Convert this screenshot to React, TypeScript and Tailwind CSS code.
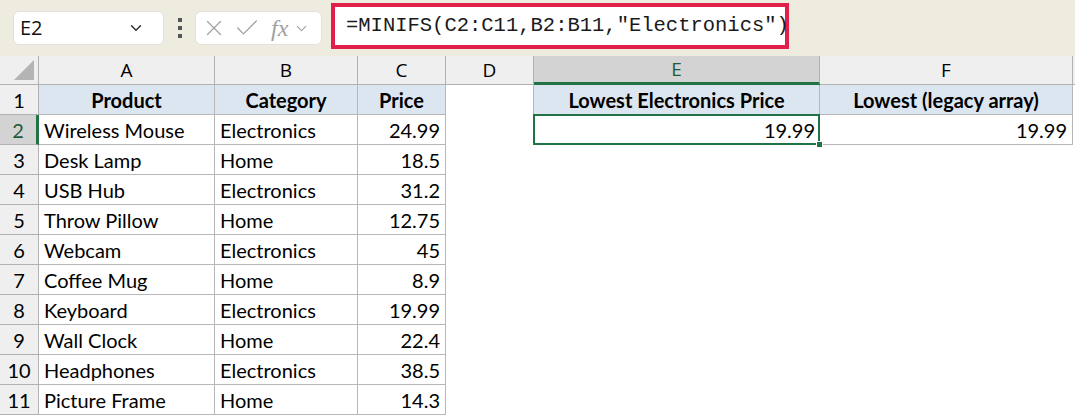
import { ChevronDown, X, Check } from "lucide-react"

const rows = [
  ["Wireless Mouse", "Electronics", "24.99"],
  ["Desk Lamp", "Home", "18.5"],
  ["USB Hub", "Electronics", "31.2"],
  ["Throw Pillow", "Home", "12.75"],
  ["Webcam", "Electronics", "45"],
  ["Coffee Mug", "Home", "8.9"],
  ["Keyboard", "Electronics", "19.99"],
  ["Wall Clock", "Home", "22.4"],
  ["Headphones", "Electronics", "38.5"],
  ["Picture Frame", "Home", "14.3"],
]

const grid = "grid grid-cols-[39px_176px_143px_88px_88px_286px_253px_1fr]"
const cell = "h-[30px] border-r border-b border-[#b7b7b7] px-[5px] flex items-center"

export default function App() {
  return (
    <div className="w-[1075px] h-[416px] overflow-hidden bg-white font-['Lato',sans-serif] text-[20px] text-black">
      {/* Toolbar */}
      <div className="h-[56px] bg-[#eeecdf] flex items-start pl-[13px] pt-[11px]">
        <div className="w-[151px] h-[34px] bg-white rounded-[6px] border border-[#e2e2dc] flex items-center justify-between pl-[6px] pr-[18px] text-[20px] font-['Open_Sans',sans-serif] text-[#111]">
          <span>E2</span>
          <ChevronDown className="w-[18px] h-[18px] text-[#333]" strokeWidth={2} />
        </div>
        <div className="w-[31px] h-[34px] flex flex-col items-center justify-center gap-[4px]">
          <span className="w-[4px] h-[4px] bg-[#555]" />
          <span className="w-[4px] h-[4px] bg-[#555]" />
          <span className="w-[4px] h-[4px] bg-[#555]" />
        </div>
        <div className="w-[127px] h-[34px] bg-white rounded-[6px] border border-[#e2e2dc] flex items-center pl-[5px] text-[#a0a0a0]">
          <X className="w-[26px] h-[26px]" strokeWidth={1.1} />
          <Check className="w-[28px] h-[28px] ml-[6px]" strokeWidth={1.1} />
          <span className="ml-[10px] italic font-['Liberation_Serif',serif] text-[24px] leading-none">fx</span>
          <ChevronDown className="w-[17px] h-[17px] ml-[5px]" strokeWidth={1.6} />
        </div>
        <div className="ml-[9px] mt-[-8px] w-[458px] h-[46px] border-4 border-[#e11f4b] bg-white flex items-center pl-[11px]">
          <span className="font-['Liberation_Mono',monospace] text-[20.5px] text-[#1a1a1a]">
            =MINIFS(C2:C11,B2:B11,"Electronics")
          </span>
        </div>
      </div>

      {/* Column headers */}
      <div className={grid}>
        <div className="h-[29px] bg-[#efefef] border-r border-b border-[#b1b1b1] relative">
          <div className="absolute right-[4px] bottom-[4px] w-0 h-0 border-l-[20px] border-l-transparent border-b-[20px] border-b-[#b4b4b4]" />
        </div>
        {["A", "B", "C", "D"].map((c) => (
          <div key={c} className="h-[29px] bg-[#efefef] border-r border-b border-[#b1b1b1] flex items-center justify-center text-[19px] font-['Open_Sans',sans-serif]">
            {c}
          </div>
        ))}
        <div className="h-[29px] bg-[#d3d3d3] border-r border-[#b1b1b1] border-b-[3px] border-b-[#217346] flex items-center justify-center text-[19px] font-['Open_Sans',sans-serif] text-[#1d5a38]">
          E
        </div>
        <div className="h-[29px] bg-[#efefef] border-r border-b border-[#b1b1b1] flex items-center justify-center text-[19px] font-['Open_Sans',sans-serif]">
          F
        </div>
        <div className="h-[29px] bg-[#efefef] border-b border-[#b1b1b1]" />
      </div>

      {/* Row 1 */}
      <div className={grid}>
        <div className="h-[30px] bg-[#efefef] border-r border-b border-[#b1b1b1] flex items-center justify-center">1</div>
        <div className={`${cell} bg-[#dce6f1] justify-center font-bold`}>Product</div>
        <div className={`${cell} bg-[#dce6f1] justify-center font-bold`}>Category</div>
        <div className={`${cell} bg-[#dce6f1] justify-center font-bold`}>Price</div>
        <div className="h-[30px] border-r border-[#b7b7b7]" />
        <div className={`${cell} bg-[#dce6f1] justify-center font-bold`}>Lowest Electronics Price</div>
        <div className={`${cell} bg-[#dce6f1] justify-center font-bold`}>Lowest (legacy array)</div>
        <div />
      </div>

      {rows.map((r, i) => {
        const n = i + 2
        const sel = n === 2
        return (
          <div key={n} className={grid}>
            <div
              className={`h-[30px] border-b border-[#b1b1b1] flex items-center justify-center ${
                sel ? "bg-[#d3d3d3] text-[#1d5a38] border-r-[3px] border-r-[#217346]" : "bg-[#efefef] border-r"
              }`}
            >
              {n}
            </div>
            <div className={cell}>{r[0]}</div>
            <div className={cell}>{r[1]}</div>
            <div className={`${cell} justify-end`}>{r[2]}</div>
            {sel ? (
              <>
                <div className="h-[30px]" />
                <div className="h-[30px] relative flex items-center justify-end px-[5px] border-b border-[#b7b7b7]">
                  <div className="absolute inset-[-1px_0_-1px_-1px] border-2 border-[#217346]" />
                  <div className="absolute right-[-3px] bottom-[-4px] w-[7px] h-[7px] bg-[#217346] border border-white" />
                  19.99
                </div>
                <div className={`${cell} justify-end`}>19.99</div>
                <div />
              </>
            ) : (
              <>
                <div />
                <div />
                <div />
                <div />
              </>
            )}
          </div>
        )
      })}
    </div>
  )
}
